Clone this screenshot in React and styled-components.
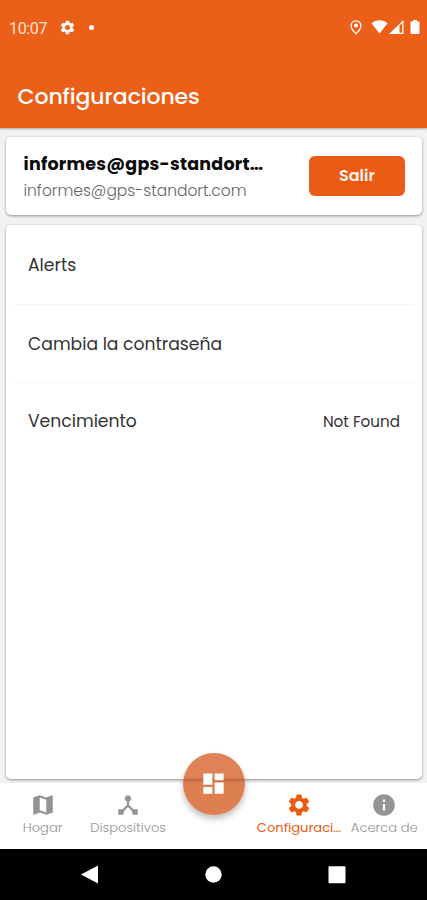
import React from 'react';
import styled, { createGlobalStyle } from 'styled-components';
import {
  MdSettings,
  MdMap,
  MdDeviceHub,
  MdDashboard,
  MdInfo,
} from 'react-icons/md';

const GlobalStyle = createGlobalStyle`
  * {
    box-sizing: border-box;
  }
  body {
    margin: 0;
    background: #f2f2f2;
    font-family: Poppins, Inter, 'Liberation Sans', sans-serif;
  }
`;

// Elements
const Screen = styled.div`
  display: flex;
  flex-direction: column;
  width: 427px;
  height: 900px;
  overflow: hidden;
  background: #f2f2f2;
`;

const Header = styled.header`
  height: 128px;
  flex: none;
  background: #ec5f18;
  color: #fff;
  box-shadow: 0 1px 2px rgba(0, 0, 0, 0.3);
`;

const StatusBar = styled.div`
  display: flex;
  align-items: center;
  height: 54px;
  padding: 0 7px 0 9px;
  font-family: Roboto, sans-serif;
  font-size: 16px;
  letter-spacing: -0.35px;
  color: #ffe3d3;
`;

const StatusIcon = styled.svg`
  flex: none;
  fill: #fff;
  margin-left: ${({ $gap }) => $gap || 0}px;
`;

const Clock = styled.span`
  width: 50px;
  padding-top: 2px;
`;

const Dot = styled.span`
  width: 5px;
  height: 5px;
  margin: 0 auto 0 13px;
  border-radius: 50%;
  background: #fff;
`;

const Title = styled.h1`
  margin: 0;
  padding: 26px 17.6px 0;
  font-size: 22px;
  font-weight: 500;
  line-height: 34px;
  letter-spacing: -0.1px;
`;

const Main = styled.main`
  flex: 1;
  display: flex;
  flex-direction: column;
  gap: 10px;
  padding: 9px 5px 4px 6px;
`;

const Card = styled.section`
  background: #fff;
  border-radius: 5px;
  box-shadow: 0 1px 3px rgba(0, 0, 0, 0.4);
`;

const Account = styled(Card)`
  display: flex;
  align-items: center;
  justify-content: space-between;
  height: 78px;
  padding: 0 17px;
`;

const Identity = styled.div`
  padding: 2px 0 0 0.5px;
  white-space: nowrap;
`;

const Name = styled.div`
  font-size: 17.5px;
  font-weight: 700;
  line-height: 26px;
  letter-spacing: 0.22px;
  color: #0b0b0b;
`;

const Email = styled.div`
  font-size: 15.5px;
  font-weight: 300;
  line-height: 27px;
  color: #666;
`;

const LogoutButton = styled.button`
  width: 96px;
  height: 40px;
  margin-bottom: 1px;
  padding: 0 0 1px;
  border: 0;
  border-radius: 6px;
  background: #ea5c15;
  color: #fff3ec;
  font-family: inherit;
  font-size: 16px;
  font-weight: 600;
`;

const Settings = styled(Card)`
  flex: 1;
  padding: 1px 7px;
`;

const Row = styled.div`
  display: flex;
  align-items: center;
  justify-content: space-between;
  height: 78px;
  padding: 0 15px;
  font-size: 17.2px;
  color: #333;

  & + & {
    border-top: 1px solid #f7f7f7;
  }

  &:last-child {
    padding-bottom: 1px;
  }
`;

const Value = styled.span`
  padding-top: 1px;
  font-size: 15.2px;
`;

const TabBar = styled.nav`
  flex: none;
  display: grid;
  grid-template-columns: repeat(5, 1fr);
  height: 66px;
  background: #fff;
`;

const Tab = styled.div`
  display: flex;
  flex-direction: column;
  align-items: center;
  padding-top: 9px;
  color: ${({ $active }) => ($active ? '#ec5a12' : '#949494')};
  font-size: 13.1px;
  font-weight: ${({ $active }) => ($active ? 400 : 300)};
  line-height: 20px;
  white-space: nowrap;
`;

const Fab = styled.button`
  position: relative;
  top: -30px;
  left: 0.5px;
  justify-self: center;
  display: flex;
  align-items: center;
  justify-content: center;
  width: 62px;
  height: 62px;
  padding: 0 0 1px;
  border: 0;
  border-radius: 50%;
  background: linear-gradient(
    #df8356 0 25px,
    #c36b44 26px 28px,
    #de7f51 29px
  );
  color: #fff;
  box-shadow: 0 4px 6px rgba(0, 0, 0, 0.25);
`;

const SystemBar = styled.footer`
  flex: none;
  display: flex;
  align-items: center;
  justify-content: space-between;
  height: 51px;
  padding: 0 81px;
  background: #000;
`;

const tabs = [
  { label: 'Hogar', icon: MdMap },
  { label: 'Dispositivos', icon: MdDeviceHub },
  null,
  { label: 'Configuraci…', icon: MdSettings, active: true },
  { label: 'Acerca de', icon: MdInfo },
];

const App = () => (
  <>
    <GlobalStyle />
    <Screen>
      <Header>
        <StatusBar>
          <Clock>10:07</Clock>
          <MdSettings size={17} color="#fff" />
          <Dot />
          <StatusIcon width="12" height="15" viewBox="0 0 12 15">
            <path
              d="M6 .9C3.200 .9 1.100 3 1.100 5.700 1.100 9 6 13.800 6 13.800S10.900 9 10.900 5.700C10.900 3 8.800 .9 6 .9Z"
              fill="none"
              stroke="#fff"
              strokeWidth="1.300"
            />
            <circle cx="6" cy="5.500" r="2.100" />
          </StatusIcon>
          <StatusIcon $gap={9} width="17" height="14" viewBox="0 0 17 14">
            <path d="M0.5 3.2C5-.8 12-.8 16.500 3.200L8.500 13.500Z" />
          </StatusIcon>
          <StatusIcon $gap={1} width="15" height="14" viewBox="0 0 15 14">
            <path
              d="M0 14 14.500 0V14ZM10.500 5.600V12.700H13.200V3Z"
              fillRule="evenodd"
            />
          </StatusIcon>
          <StatusIcon $gap={6} width="10" height="14" viewBox="0 0 10 14">
            <path d="M3 0H7V1.500H9.500V14H.5V1.500H3Z" />
          </StatusIcon>
        </StatusBar>
        <Title>Configuraciones</Title>
      </Header>

      <Main>
        <Account>
          <Identity>
            <Name>informes@gps-standort…</Name>
            <Email>informes@gps-standort.com</Email>
          </Identity>
          <LogoutButton>Salir</LogoutButton>
        </Account>
        <Settings>
          <Row>Alerts</Row>
          <Row>Cambia la contraseña</Row>
          <Row>
            Vencimiento
            <Value>Not Found</Value>
          </Row>
        </Settings>
      </Main>

      <TabBar>
        {tabs.map((tab) =>
          tab ? (
            <Tab key={tab.label} $active={tab.active}>
              <tab.icon size={26} />
              {tab.label}
            </Tab>
          ) : (
            <Fab key="dashboard" aria-label="Dashboard">
              <MdDashboard size={27} />
            </Fab>
          )
        )}
      </TabBar>

      <SystemBar>
        <svg width="17" height="20" viewBox="0 0 17 20" fill="#fff">
          <path d="M0 9.500 17 .5V18.500Z" />
        </svg>
        <svg width="18" height="18" viewBox="0 0 18 18" fill="#fff">
          <circle cx="9.500" cy="8.500" r="8.200" />
        </svg>
        <svg width="18" height="18" viewBox="0 0 18 18" fill="#fff">
          <rect x=".5" y=".2" width="17" height="17" rx="1" />
        </svg>
      </SystemBar>
    </Screen>
  </>
);

export default App;
